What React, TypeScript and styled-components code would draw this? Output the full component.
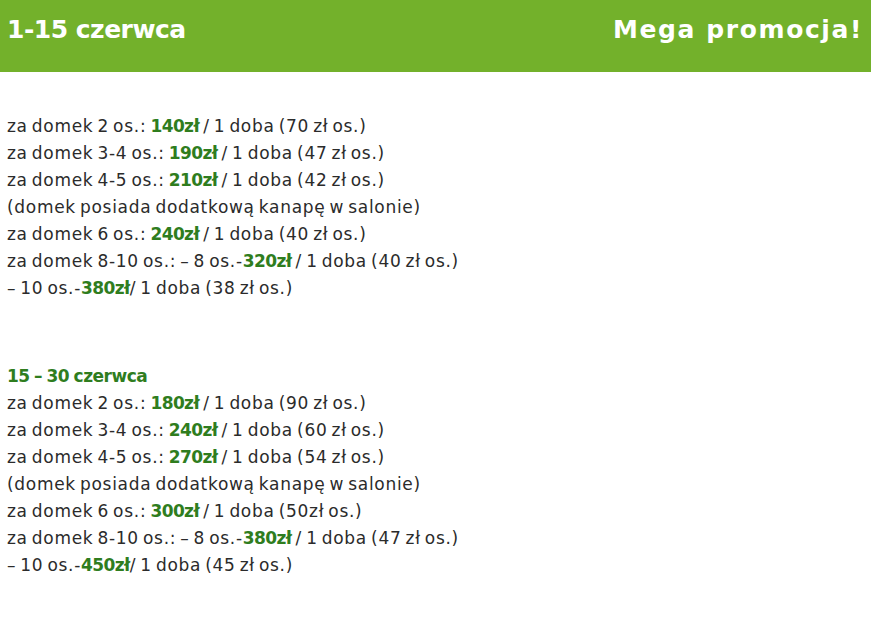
import styled, {createGlobalStyle} from 'styled-components';

const GlobalStyle = createGlobalStyle`
  body {
    margin: 0;
    background: #fff;
    font-family: "DejaVu Sans", "Open Sans", sans-serif;
  }
`

type Row = {
    before: string
    price: string
    after: string
}

type Period = {
    title?: string
    rows: (Row | string)[]
}

const periods: Period[] = [
    {
        rows: [
            {before: 'za domek 2 os.: ', price: '140zł', after: ' / 1 doba (70 zł os.)'},
            {before: 'za domek 3-4 os.: ', price: '190zł', after: ' / 1 doba (47 zł os.)'},
            {before: 'za domek 4-5 os.: ', price: '210zł', after: ' / 1 doba (42 zł os.)'},
            '(domek posiada dodatkową kanapę w salonie)',
            {before: 'za domek 6 os.: ', price: '240zł', after: ' / 1 doba (40 zł os.)'},
            {before: 'za domek 8-10 os.: – 8 os.-', price: '320zł', after: ' / 1 doba (40 zł os.)'},
            {before: '– 10 os.-', price: '380zł', after: '/ 1 doba (38 zł os.)'},
        ],
    },
    {
        title: '15 – 30 czerwca',
        rows: [
            {before: 'za domek 2 os.: ', price: '180zł', after: ' / 1 doba (90 zł os.)'},
            {before: 'za domek 3-4 os.: ', price: '240zł', after: ' / 1 doba (60 zł os.)'},
            {before: 'za domek 4-5 os.: ', price: '270zł', after: ' / 1 doba (54 zł os.)'},
            '(domek posiada dodatkową kanapę w salonie)',
            {before: 'za domek 6 os.: ', price: '300zł', after: ' / 1 doba (50zł os.)'},
            {before: 'za domek 8-10 os.: – 8 os.-', price: '380zł', after: ' / 1 doba (47 zł os.)'},
            {before: '– 10 os.-', price: '450zł', after: '/ 1 doba (45 zł os.)'},
        ],
    },
]

export default function App() {
    return (
        <>
            <GlobalStyle/>
            <Header>
                <HeaderTitle $spacing={-0.5}>1-15 czerwca</HeaderTitle>
                <HeaderTitle $spacing={1.6}>Mega promocja!</HeaderTitle>
            </Header>
            <Content>
                {periods.map((period, i) => (
                    <Block key={i}>
                        {period.title && <BlockTitle>{period.title}</BlockTitle>}
                        {period.rows.map((row, j) => (
                            <Line key={j}>
                                {typeof row === 'string' ? row : (
                                    <>
                                        {row.before}<Price>{row.price}</Price>{row.after}
                                    </>
                                )}
                            </Line>
                        ))}
                    </Block>
                ))}
            </Content>
        </>
    )
}

const Header = styled.header`
  display: flex;
  justify-content: space-between;
  align-items: flex-start;
  height: 72px;
  padding: 14px 8px 0 7px;
  box-sizing: border-box;
  background: #73b12b;
`

const HeaderTitle = styled.h1<{ $spacing: number }>`
  margin: 0;
  color: #fff;
  font-size: 25px;
  font-weight: 700;
  line-height: 32px;
  letter-spacing: ${p => p.$spacing}px;
`

const Content = styled.main`
  display: flex;
  flex-direction: column;
  gap: 61px;
  padding: 41px 7px 0;
`

const Block = styled.section`
  display: flex;
  flex-direction: column;
`

const Line = styled.p`
  margin: 0;
  color: #2b2b2b;
  font-size: 17px;
  line-height: 27px;
  letter-spacing: 0.7px;
  word-spacing: -2px;
  white-space: nowrap;
`

const BlockTitle = styled(Line)`
  color: #2f7d1e;
  font-weight: 700;
  letter-spacing: -0.5px;
  word-spacing: -1px;
`

const Price = styled.strong`
  color: #2f7d1e;
  font-weight: 700;
  letter-spacing: -0.6px;
`
